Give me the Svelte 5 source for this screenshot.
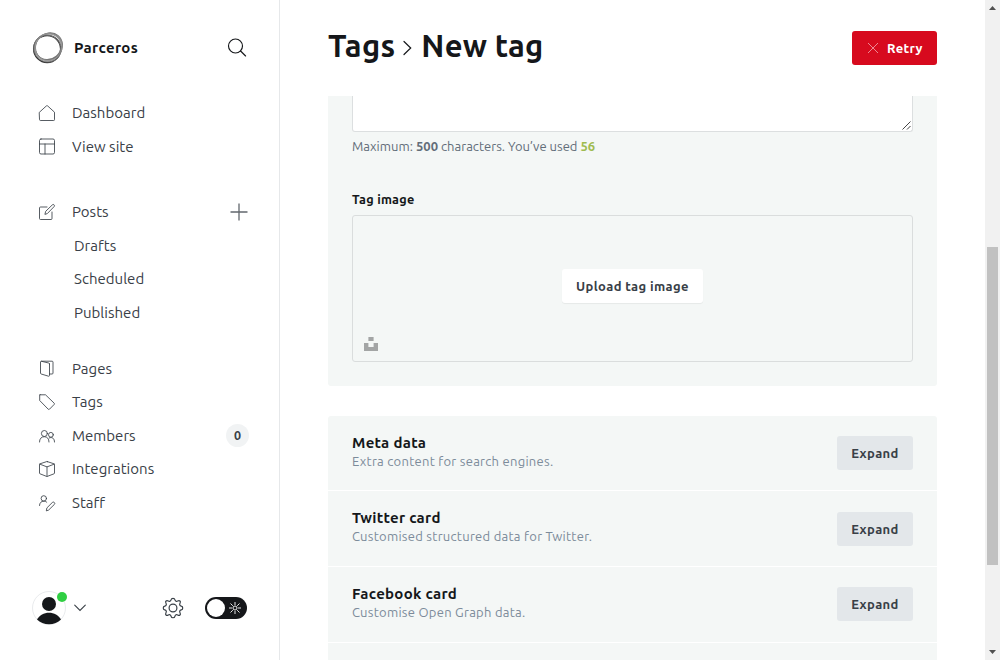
<script>
  const groups = [
    { gap: 0, items: [
      { label: 'Dashboard', icon: 'home' },
      { label: 'View site', icon: 'layout' }
    ] },
    { gap: 32, items: [
      { label: 'Posts', icon: 'edit', plus: true },
      { label: 'Drafts', sub: true },
      { label: 'Scheduled', sub: true },
      { label: 'Published', sub: true }
    ] },
    { gap: 22.5, items: [
      { label: 'Pages', icon: 'pages' },
      { label: 'Tags', icon: 'tag' },
      { label: 'Members', icon: 'members', count: 0 },
      { label: 'Integrations', icon: 'box' },
      { label: 'Staff', icon: 'staff' }
    ] }
  ];
  const icons = {
    home: 'M.5 7.2 7.4.9a1 1 0 0 1 1.2 0l6.9 6.3v7.500a.8.8 0 0 1-.8.8H1.300a.8.8 0 0 1-.8-.8z',
    layout: 'M2 0h12A1.500 1.500 0 0 1 15.500 1.500v12a1.500 1.500 0 0 1-1.500 1.500H2A1.500 1.500 0 0 1 .5 13.500V1.500A1.500 1.500 0 0 1 2 0zM.5 5h15M6 5v10',
    edit: 'M8 3H1.500a1 1 0 0 0-1 1v10.500a1 1 0 0 0 1 1h10.500a1 1 0 0 0 1-1V8M6 10l.7-2.700L13.300.9a1.200 1.200 0 0 1 1.800 1.700L8.600 9.300z',
    pages: 'M10.500 3v11.500a.7.7 0 0 1-1 .7L2.200 13a1 1 0 0 1-.7-1V1a.8.8 0 0 1 1-.7L9.700 2a1 1 0 0 1 .8 1zM2.500.2h10.600a.9.9 0 0 1 .9.9v11a.9.9 0 0 1-.9.9h-2.600',
    tag: 'M1 .8h5.500L15.200 9.200a1 1 0 0 1 0 1.200l-4.700 4.800a1 1 0 0 1-1.300 0L.7 6.500V1.200A.5.5 0 0 1 1 .8z',
    members: 'M.5 14c0-3.400 1.900-5.300 4.800-5.300s4.700 1.900 4.700 5.300M8.400 5.500a3 3 0 1 1-6 0 3 3 0 0 1 6 0zM14.300 6.800a2.400 2.400 0 1 1-4.800 0 2.400 2.400 0 0 1 4.800 0zM10.300 9.900c3-1.300 5.200.6 5.200 4.100',
    box: 'M8.300.6 15 2.800a.7.7 0 0 1 .5.7v8.500a.8.8 0 0 1-.5.8l-6.700 2.600a1 1 0 0 1-.7 0L1 12.800a.8.8 0 0 1-.5-.8V3.500a.7.7 0 0 1 .5-.7L7.700.6a1 1 0 0 1 .6 0zM.7 3.100 8 5.900l7.300-2.800M8 5.900v9.600',
    staff: 'M.5 10.500C.6 7.700 2.300 6.200 4.800 6.200c1.200 0 2.300.4 3 1.100M7.500 3.400a2.700 2.700 0 1 1-5.400 0 2.700 2.700 0 0 1 5.400 0zM7.400 15.500l.5-2.600 5.400-5.400a1.400 1.400 0 0 1 2 2l-5.400 5.300z'
  };
  const cards = [
    { title: 'Meta data', text: 'Extra content for search engines.' },
    { title: 'Twitter card', text: 'Customised structured data for Twitter.' },
    { title: 'Facebook card', text: 'Customise Open Graph data.' }
  ];
</script>

<div class="app">
  <nav>
    <header>
      <svg class="logo" width="32" height="32" viewBox="0 0 32 32" fill="none">
        <circle cx="15.200" cy="16.900" r="13.500" stroke="#333" stroke-width="1.500" />
        <ellipse cx="17.100" cy="15.100" rx="13.800" ry="12.700" stroke="#777" stroke-width="1.500" transform="rotate(-40 16 16)" />
        <ellipse cx="17.800" cy="15.800" rx="14.300" ry="12.900" stroke="#777" stroke-width="1" transform="rotate(-50 16 16)" />
        <ellipse cx="16.800" cy="15.800" rx="13.600" ry="13.200" stroke="#999" stroke-width="1.300" transform="rotate(-45 16 16)" />
        <ellipse cx="15.800" cy="16.800" rx="14" ry="13.300" stroke="#777" stroke-width=".8" transform="rotate(35 16 16)" />
      </svg>
      <strong>Parceros</strong>
      <svg class="search" width="20" height="20" viewBox="0 0 20 20" fill="none" stroke="#15171a" stroke-width="1.150" stroke-linecap="round">
        <circle cx="8.500" cy="8" r="7" /><path d="m13.600 13 5 5" />
      </svg>
    </header>
    <div class="menu">
      {#each groups as group}
        <ul style:margin-top="{group.gap}px">
          {#each group.items as item}
            <li class:sub={item.sub}>
              {#if item.icon}
                <svg class="icon" width="16" height="16" viewBox="0 0 16 16" fill="none" stroke="#394047" stroke-width=".85" stroke-linejoin="round" stroke-linecap="round"><path d={icons[item.icon]} /></svg>
              {/if}
              <span>{item.label}</span>
              {#if item.plus}
                <svg class="plus" width="18" height="18" viewBox="0 0 18 18" stroke="#62676d" stroke-width="1.300"><path d="M9 .5v17M.5 9h17" /></svg>
              {/if}
              {#if item.count !== undefined}<b class="count">{item.count}</b>{/if}
            </li>
          {/each}
        </ul>
      {/each}
    </div>
    <footer>
      <div class="avatar">
        <svg width="34" height="34" viewBox="0 0 34 34">
          <circle cx="17" cy="17" r="16.500" fill="#fff" stroke="#e9ebed" />
          <circle cx="17" cy="13" r="7" fill="#15171a" />
          <path d="M5 28.500C7.300 24.300 12 21.700 17 21.700s9.700 2.600 12 6.800C26 31.700 21.700 33.300 17 33.300S8 31.700 5 28.500z" fill="#15171a" />
        </svg>
        <i></i>
      </div>
      <svg class="down" width="12" height="8" viewBox="0 0 12 8" fill="none" stroke="#394047" stroke-width="1.100" stroke-linecap="round"><path d="m.7 1.200 5.300 5.300 5.300-5.300" /></svg>
      <svg class="gear" width="22" height="22" viewBox="-11 -11 22 22" fill="none" stroke="#394047" stroke-width="1.200" stroke-linejoin="round">
        <circle r="3.900" />
        <path d="M-1.900-8.300C-1.500-10.200 1.500-10.200 1.900-8.300C2.300-6.700 3.500-6.300 4.700-7C6.600-8.100 8.100-6.600 7-4.700C6.300-3.500 6.700-2.300 8.300-1.900C10.200-1.500 10.200 1.500 8.300 1.900C6.700 2.300 6.300 3.500 7 4.700C8.100 6.600 6.600 8.100 4.700 7C3.500 6.300 2.300 6.700 1.900 8.300C1.500 10.200-1.500 10.200-1.900 8.300C-2.300 6.700-3.500 6.300-4.700 7C-6.600 8.100-8.100 6.600-7 4.700C-6.300 3.500-6.700 2.300-8.300 1.900C-10.200 1.500-10.200-1.500-8.300-1.900C-6.700-2.300-6.300-3.500-7-4.700C-8.100-6.600-6.600-8.100-4.700-7C-3.500-6.300-2.300-6.700-1.900-8.300Z" />
      </svg>
      <div class="toggle">
        <i></i>
        <svg width="12" height="12" viewBox="0 0 12 12" fill="none" stroke="#fff" stroke-width=".9"><circle cx="6" cy="6" r="2" /><path d="M6 0v3M6 9v3M0 6h3M9 6h3M1.500 1.500l2.300 2.300M8.200 8.200l2.300 2.300M1.500 10.500l2.300-2.300M8.200 3.800l2.300-2.300" /></svg>
      </div>
    </footer>
  </nav>

  <main>
    <div class="top">
      <h1>
        <span>Tags</span>
        <svg width="9" height="16" viewBox="0 0 9 16" fill="none" stroke="#15171a" stroke-width="1.200" stroke-linecap="round"><path d="m1 1.500 6.700 6.500L1 14.500" /></svg>
        <span>New tag</span>
      </h1>
      <button class="retry">
        <svg width="12" height="12" viewBox="0 0 12 12" stroke="#fff" stroke-opacity=".65" stroke-width=".8"><path d="m1 1 10 10M11 1 1 11" /></svg>
        <span>Retry</span>
      </button>
    </div>
    <section class="basic">
      <div class="area">
        <svg width="9" height="9" viewBox="0 0 9 9" stroke="#444" stroke-width="1"><path d="M.5 8.500 8.500.5M5 8.500 8.500 5" /></svg>
      </div>
      <p class="hint">Maximum: <b>500</b> characters. You’ve used <b class="used">56</b></p>
      <h2>Tag image</h2>
      <div class="image">
        <button class="upload">Upload tag image</button>
        <svg class="unsplash" width="14" height="14" viewBox="0 0 14 14" fill="#a3a5a5"><path d="M4.400 0h5.200v4H4.400zM0 6h4.400v4h5.200V6H14v8H0z" /></svg>
      </div>
    </section>
    <section class="cards">
      {#each cards as card}
        <div class="card">
          <div>
            <h3>{card.title}</h3>
            <p>{card.text}</p>
          </div>
          <button class="expand">Expand</button>
        </div>
      {/each}
      <div class="card"></div>
    </section>
  </main>

  <div class="scrollbar">
    <svg width="7" height="4" viewBox="0 0 7 4" fill="#505050"><path d="M0 4 3.500 0 7 4z" /></svg>
    <div class="thumb"></div>
    <svg class="end" width="7" height="4" viewBox="0 0 7 4" fill="#505050"><path d="M0 0h7L3.500 4z" /></svg>
  </div>
</div>

<style>
  :global(body) { margin: 0; overflow: hidden; }
  * { box-sizing: border-box; }
  .app { display: flex; width: 1000px; height: 660px; overflow: hidden; background: #fff; color: #15171a; font-family: Ubuntu, "Open Sans", "Noto Sans", sans-serif; letter-spacing: .2px; }
  svg { display: block; flex: none; overflow: visible; }
  button { border: 0; padding: 0; font-family: inherit; letter-spacing: .38px; }
  nav { width: 280px; flex: none; display: flex; flex-direction: column; border-right: 1px solid #e6e8ea; }
  header { display: flex; align-items: center; height: 96.250px; padding: 0 32px; }
  header strong { margin-left: 10px; padding-bottom: 1px; font-size: 15px; font-weight: 700; letter-spacing: .36px; }
  .search { margin-left: auto; }
  ul { list-style: none; margin: 0; padding: 0 31px 0 39px; }
  li { display: flex; align-items: center; height: 33.500px; font-size: 15px; letter-spacing: .02px; color: #394047; white-space: nowrap; }
  li span { padding-bottom: .5px; }
  .icon { margin-right: 17px; }
  .sub { padding-left: 35px; }
  .plus { margin-left: auto; }
  .count { margin: 0 -1px 0 auto; display: flex; align-items: center; justify-content: center; width: 23px; height: 23px; padding-bottom: 1px; border-radius: 50%; background: #f1f3f4; font-size: 12.500px; font-weight: 600; }
  footer { display: flex; align-items: center; margin-top: auto; height: 104px; padding: 0 32px; }
  .avatar { position: relative; }
  .avatar i { position: absolute; top: 1px; right: -1px; width: 10px; height: 10px; border-radius: 50%; background: #30cf43; }
  .down { margin-left: 8px; }
  .gear { margin-left: 76px; }
  .toggle { display: flex; align-items: center; justify-content: space-between; width: 42px; height: 22px; margin-left: 21px; padding: 0 6px 0 2px; border-radius: 11px; background: #15171a; }
  .toggle i { width: 18px; height: 18px; border-radius: 50%; background: #fff; }
  main { width: 609px; flex: none; margin-left: 48px; }
  .top { display: flex; align-items: center; justify-content: space-between; height: 96px; }
  h1 { display: flex; align-items: center; margin: 0; padding-bottom: 4px; font-size: 31px; line-height: 40px; font-weight: 700; letter-spacing: .25px; white-space: nowrap; }
  h1 svg { margin: 4px 9.500px 0 7.500px; }
  .retry { display: flex; align-items: center; width: 85px; height: 34px; padding-left: 15px; border-radius: 3px; background: #d70a1e; color: #fff; font-size: 13px; font-weight: 600; }
  .retry span { margin-left: 8px; }
  .basic { height: 290px; padding: 0 24px; background: #f4f7f6; border-radius: 0 0 3px 3px; }
  .area { display: flex; align-items: flex-end; justify-content: flex-end; height: 36px; padding: 0 1px 1px; background: #fff; border: 1px solid #dcdfe0; border-top: 0; border-radius: 0 0 3px 3px; }
  .hint { margin: 4px 0 0; font-size: 13px; line-height: 20px; color: #626d79; letter-spacing: .02px; }
  .used { color: #9fbb4f; }
  h2 { margin: 33px 0 6px; font-size: 12.700px; line-height: 20px; font-weight: 600; letter-spacing: .25px; }
  .image { position: relative; display: flex; align-items: center; justify-content: center; height: 147px; padding-bottom: 5px; border: 1px solid #dadddd; border-radius: 3px; }
  .upload { width: 141px; height: 34px; border-radius: 3px; background: #fff; color: #394047; box-shadow: 0 1px 1px #0000000f; font-size: 13px; font-weight: 600; }
  .unsplash { position: absolute; left: 11px; bottom: 10px; }
  .cards { margin-top: 30px; border-radius: 3px; overflow: hidden; }
  .card { display: flex; align-items: flex-start; justify-content: space-between; height: 75.700px; padding: 20px 24px 0; background: #f4f7f6; border-bottom: 1px solid #fff; }
  .card:first-child { height: 75.300px; }
  h3 { margin: -3px 0 0; font-size: 15px; line-height: 20px; font-weight: 700; letter-spacing: .3px; }
  .card p { margin: 0; font-size: 13px; line-height: 17px; letter-spacing: .27px; color: #7c8b9a; }
  .expand { width: 76px; height: 34px; margin-top: .3px; border-radius: 3px; background: #e3e7ea; color: #394047; font-size: 13px; font-weight: 600; }
  .scrollbar { display: flex; flex-direction: column; align-items: center; width: 15px; height: 660px; margin-left: auto; padding: 6px 0; background: #f1f1f1; }
  .thumb { width: 11px; height: 318px; margin-top: 237px; background: #c1c1c1; }
  .end { margin-top: auto; }
</style>
